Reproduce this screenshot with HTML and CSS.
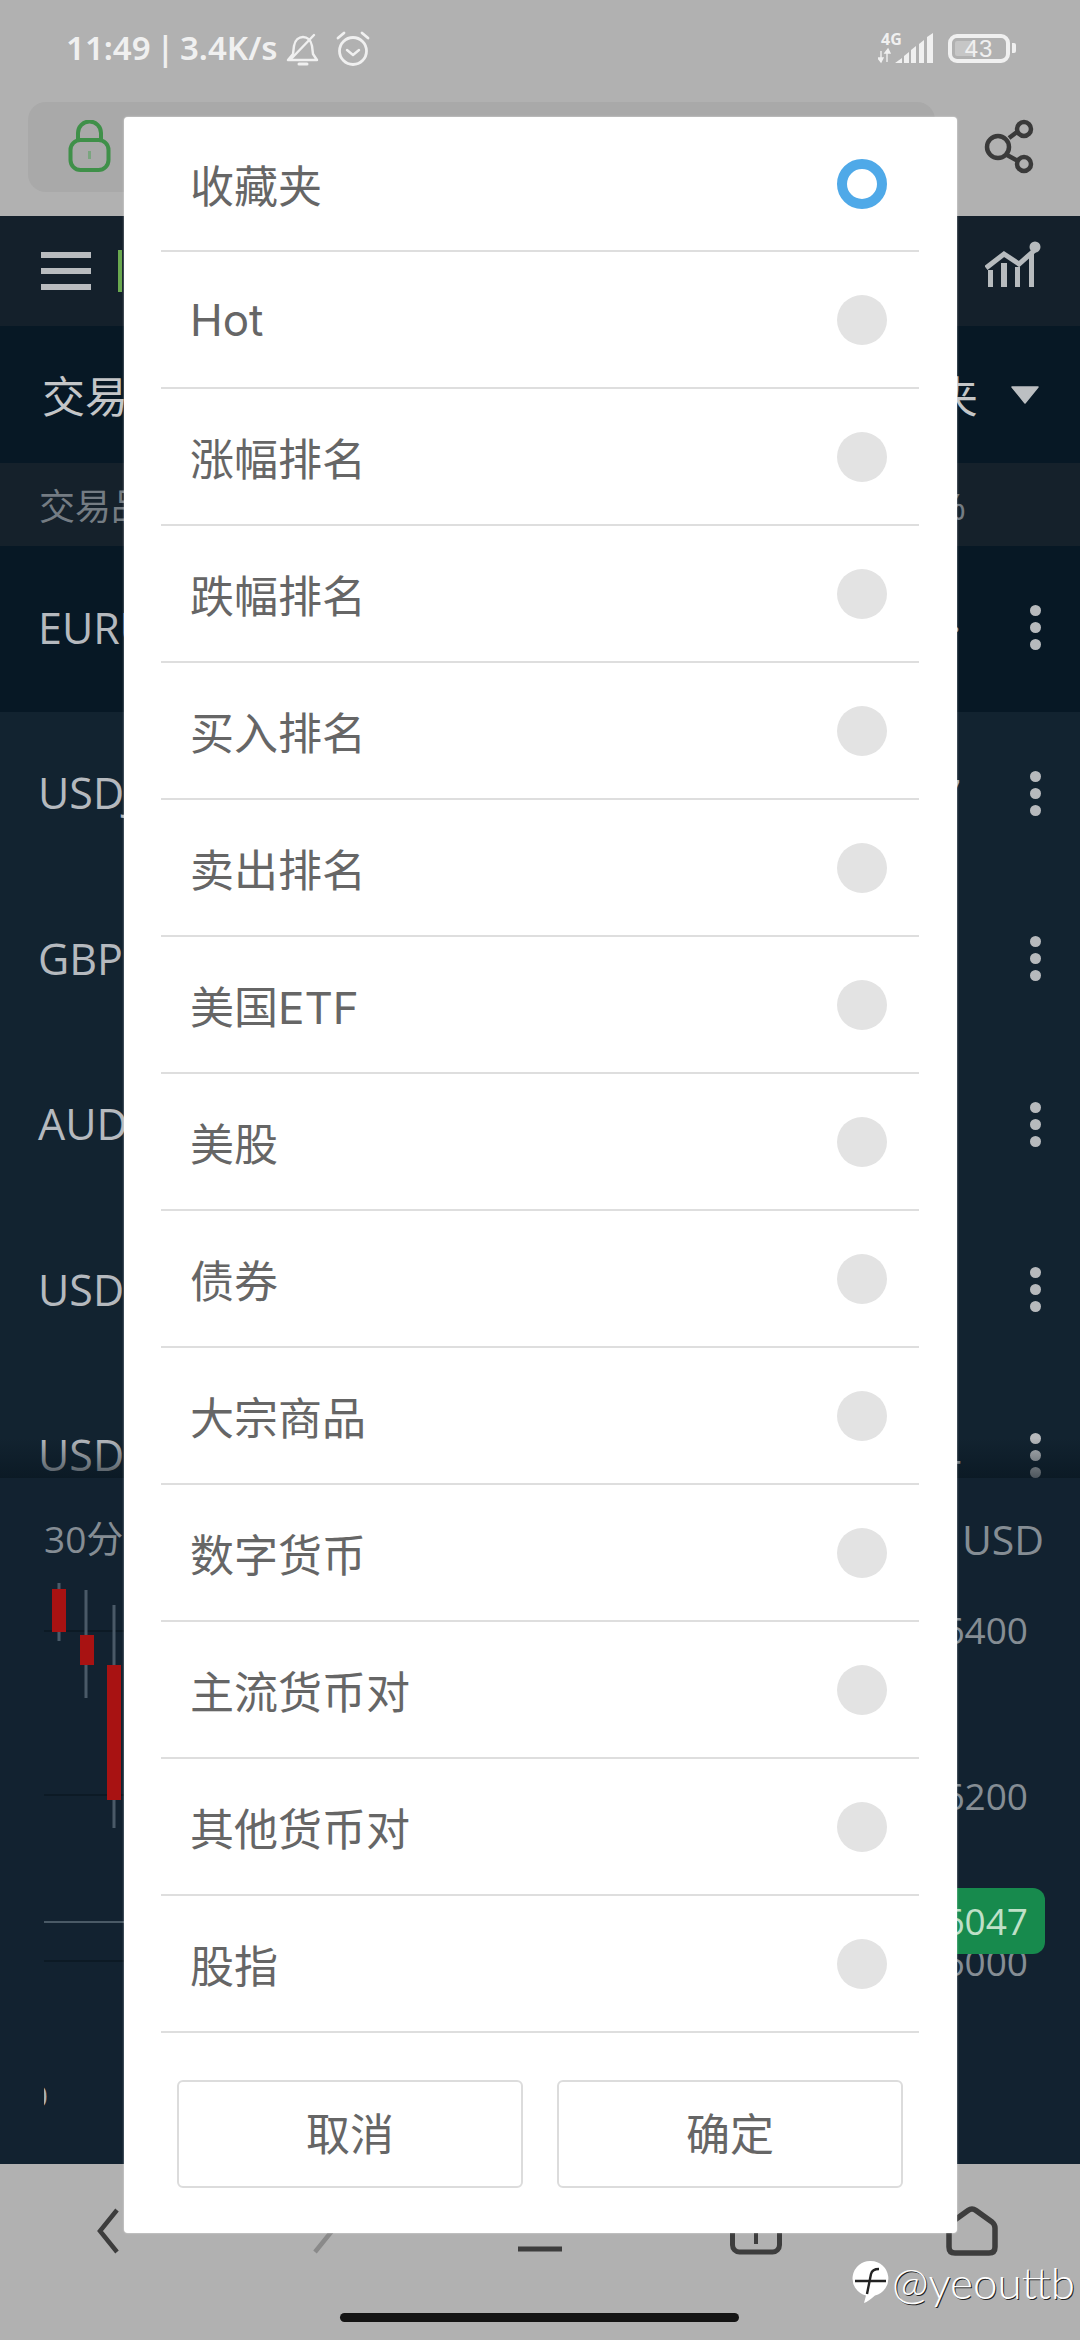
FILE: index.html
```html
<!DOCTYPE html>
<html lang="zh">
<head>
<meta charset="utf-8">
<title>交易品种</title>
<link rel="stylesheet" href="styles.css">
</head>
<body>
<div class="page">
  <section class="top">
    <div class="statusbar">
      <div class="status-left">
        <span class="clock">11:49 | 3.4K/s</span>
        <svg class="bell" width="34" height="34" viewBox="0 0 34 34" fill="none" stroke="#f0f0f0" stroke-width="2.4" stroke-linecap="round" stroke-linejoin="round">
          <path d="M2 27h29l-4-6-1-8c-1-6-5-9-9-9s-8 3-9 9l-1 8z"/>
          <path d="M5 26L28 2"/>
          <path d="M13 31h8" stroke-width="3"/>
        </svg>
        <svg class="alarm" width="36" height="36" viewBox="0 0 36 36" fill="none" stroke="#f0f0f0" stroke-width="2.8" stroke-linecap="round" stroke-linejoin="round">
          <circle cx="18" cy="20" r="13.5"/>
          <path d="M12 19l6 5 6-5" stroke-width="2.4"/>
          <path d="M3 7l6-5M33 7l-6-5"/>
        </svg>
      </div>
      <div class="status-right">
        <svg width="60" height="34" viewBox="0 0 60 34" class="signal">
          <text x="3" y="14" class="net">4G</text>
          <path d="M3 20v11M0 27l3 4 2-4zM9 31V19M7 22l3-4 2 4z" fill="#f0f0f0" stroke="#f0f0f0" stroke-width="1.4"/>
          <path d="M17 32l7-5v5zM26 25l5-4v11h-5zM33 19l5-4v17h-5zM41 13l5-4v23h-5zM49 6l6-4v30h-6z" fill="#f0f0f0"/>
        </svg>
        <div class="battery"><span class="battery-fill"></span><span class="battery-num">43</span></div>
        <span class="battery-nub"></span>
      </div>
    </div>
    <div class="urlrow">
      <div class="urlbar">
        <svg width="44" height="52" viewBox="0 0 44 52" fill="none" stroke="#3f9049" stroke-width="4">
          <rect x="2.5" y="20" width="38" height="30" rx="10"/>
          <path d="M10 20v-7a11.500 11.500 0 0 1 23 0v7"/>
          <path d="M21.500 31v8" stroke-width="3" stroke="#7aa57f"/>
        </svg>
      </div>
      <svg class="share" width="56" height="60" viewBox="0 0 56 60" fill="none" stroke="#3a3a3a" stroke-width="4.500">
        <circle cx="17" cy="29" r="11"/>
        <circle cx="43" cy="11" r="7"/>
        <circle cx="43" cy="46" r="7"/>
        <path d="M28 20l8-6M26 37l11 6"/>
      </svg>
    </div>
  </section>

  <header class="appbar">
    <div class="burger"><span></span><span></span><span></span></div>
    <span class="logo-edge"></span>
    <svg class="trend" width="56" height="50" viewBox="0 0 56 50" fill="none">
      <path d="M3 30h5v17H3zM16 23h6v24h-6zM30 27h5v20h-5zM44 13h5v34h-5z" fill="#b7bbbe"/>
      <path d="M1 28l18-14 15 10 17-15" stroke="#b7bbbe" stroke-width="5"/>
      <circle cx="50" cy="7" r="5.500" fill="#b7bbbe"/>
    </svg>
  </header>

  <nav class="tabs">
    <span class="tab-title">交易品种</span>
    <div class="tab-right">
      <span class="tab-title">收藏夹</span>
      <svg width="30" height="18" viewBox="0 0 30 18"><path d="M2 1h26l-13 16z" fill="#bcbfc2" stroke="#bcbfc2" stroke-width="1.500" stroke-linejoin="round"/></svg>
    </div>
  </nav>

  <div class="subhead">
    <span>交易品种</span>
    <span class="subhead-val">涨跌%</span>
  </div>

  <div class="list">
    <div class="row row-active"><span class="sym">EURUSD</span><span class="val">·</span><div class="dots"><i></i><i></i><i></i></div></div>
    <div class="row"><span class="sym">USDJPY</span><span class="val">7</span><div class="dots"><i></i><i></i><i></i></div></div>
    <div class="row"><span class="sym">GBPUSD</span><span class="val"></span><div class="dots"><i></i><i></i><i></i></div></div>
    <div class="row"><span class="sym">AUDUSD</span><span class="val"></span><div class="dots"><i></i><i></i><i></i></div></div>
    <div class="row"><span class="sym">USDCAD</span><span class="val"></span><div class="dots"><i></i><i></i><i></i></div></div>
    <div class="row"><span class="sym">USDCHF</span><span class="val">4</span><div class="dots"><i></i><i></i><i></i></div></div>
  </div>

  <section class="chart">
    <svg class="plot" width="1080" height="686" viewBox="0 0 1080 686">
      <g stroke="#0c1a25" stroke-width="2">
        <path d="M44 153H960M44 317H960M44 483H960"/>
      </g>
      <path d="M44 444H960" stroke="#4a5a66" stroke-width="2"/>
      <g stroke="#4a5a68" stroke-width="3">
        <path d="M59 105V163M86 112V220M114 127V350"/>
      </g>
      <g fill="#a81212">
        <rect x="52" y="111" width="14" height="43"/>
        <rect x="80" y="157" width="14" height="30"/>
        <rect x="107" y="187" width="14" height="135"/>
      </g>
    </svg>
    <div class="chart-head">
      <span>30分钟</span>
      <span class="chart-unit">USD</span>
    </div>
    <div class="axis">
      <span>6400</span>
      <span>6200</span>
      <span>6000</span>
    </div>
    <span class="price-tag">6047</span>
    <span class="time-label">0</span>
  </section>

  <footer class="browser-nav">
    <svg width="60" height="60" viewBox="0 0 60 60" fill="none" stroke="#3d3d3d" stroke-width="4.500"><path d="M39 9L22 30l17 21"/></svg>
    <svg width="60" height="60" viewBox="0 0 60 60" fill="none" stroke="#8a8a8a" stroke-width="4.500"><path d="M21 9l17 21-17 21"/></svg>
    <svg width="60" height="60" viewBox="0 0 60 60" fill="none" stroke="#3d3d3d" stroke-width="5"><path d="M8 48h44"/></svg>
    <svg width="60" height="60" viewBox="0 0 60 60" fill="none" stroke="#3d3d3d" stroke-width="5"><rect x="6.500" y="8" width="47" height="43" rx="7"/><path d="M30 30v13" stroke-width="4"/></svg>
    <svg width="60" height="60" viewBox="0 0 60 60" fill="none" stroke="#3d3d3d" stroke-width="5.500" stroke-linejoin="round"><path d="M26 9.500Q30 6.500 34 9.500L50 21Q53 23.500 53 27V46Q53 52 47 52H13Q7 52 7 46V27Q7 23.500 10 21Z"/></svg>
  </footer>

  <div class="modal">
    <ul class="options">
      <li class="option"><span>收藏夹</span><i class="radio radio-on"></i></li>
      <li class="option"><span>Hot</span><i class="radio"></i></li>
      <li class="option"><span>涨幅排名</span><i class="radio"></i></li>
      <li class="option"><span>跌幅排名</span><i class="radio"></i></li>
      <li class="option"><span>买入排名</span><i class="radio"></i></li>
      <li class="option"><span>卖出排名</span><i class="radio"></i></li>
      <li class="option"><span>美国ETF</span><i class="radio"></i></li>
      <li class="option"><span>美股</span><i class="radio"></i></li>
      <li class="option"><span>债券</span><i class="radio"></i></li>
      <li class="option"><span>大宗商品</span><i class="radio"></i></li>
      <li class="option"><span>数字货币</span><i class="radio"></i></li>
      <li class="option"><span>主流货币对</span><i class="radio"></i></li>
      <li class="option"><span>其他货币对</span><i class="radio"></i></li>
      <li class="option"><span>股指</span><i class="radio"></i></li>
    </ul>
    <div class="actions">
      <button class="btn">取消</button>
      <button class="btn">确定</button>
    </div>
  </div>

  <div class="watermark">
    <svg width="38" height="44" viewBox="0 0 38 44">
      <path d="M19 1a17.500 17.500 0 0 1 4 34.500C19 39 15 42 12 43l2-7.500A17.500 17.500 0 0 1 19 1z" fill="#fff"/>
      <path d="M15 34l4-20c1-4 4-5 8-5M3 21h31" fill="none" stroke="#222" stroke-width="2.400"/>
    </svg>
    <span>@yeouttb</span>
  </div>
  <span class="home-indicator"></span>
</div>
</body>
</html>
```
FILE: styles.css
```css
* { box-sizing: border-box; }
html, body { margin: 0; padding: 0; background: #b1b1b1; }
body { font-family: "Noto Sans", "Noto Sans CJK SC", sans-serif; }
.page { position: relative; width: 1080px; height: 2340px; overflow: hidden; display: flex; flex-direction: column; }

/* top system + browser */
.top { height: 216px; background: #b1b1b1; flex: none; }
.statusbar { height: 102px; padding: 0 64px 6px 66px; display: flex; justify-content: space-between; align-items: center; color: #f0f0f0; }
.status-left { display: flex; align-items: center; }
.clock { font: 600 33px/40px "Noto Sans", sans-serif; word-spacing: -3px; white-space: nowrap; }
.bell { margin-left: 8px; margin-top: 4px; }
.alarm { margin-left: 15px; margin-top: 2px; }
.status-right { display: flex; align-items: center; }
.signal { margin-right: 10px; }
.net { font: 700 16px "Noto Sans", sans-serif; fill: #f0f0f0; }
.battery { position: relative; width: 62px; height: 29px; border: 4px solid #f0f0f0; border-radius: 9px; display: flex; align-items: center; justify-content: center; }
.battery-fill { position: absolute; left: 3px; top: 3px; bottom: 3px; width: 20px; background: #c6c6c6; border-radius: 2px; }
.battery-num { position: relative; font: 400 24px/21px "Liberation Sans", sans-serif; color: #f0f0f0; letter-spacing: 1px; }
.battery-nub { width: 4px; height: 10px; margin-left: 2px; background: #f0f0f0; border-radius: 0 2px 2px 0; }
.urlrow { display: flex; align-items: flex-start; padding-left: 28px; }
.urlbar { width: 907px; height: 90px; background: #a9a9a9; border-radius: 18px; padding: 18px 0 0 40px; }
.share { margin: 16px 0 0 46px; }

/* app header */
.appbar { height: 110px; flex: none; background: #14202b; display: flex; align-items: center; padding-left: 41px; position: relative; }
.burger { width: 50px; height: 38px; display: flex; flex-direction: column; justify-content: space-between; }
.burger span { display: block; height: 6px; background: #b9bcbf; }
.logo-edge { width: 4px; height: 42px; margin-left: 27px; background: #6aa84f; }
.trend { margin-left: auto; margin-right: 39px; margin-top: -12px; }

.tabs { height: 137px; flex: none; background: #071825; display: flex; justify-content: space-between; align-items: center; padding: 4px 40px 0 42px; }
.tab-title { font-size: 43px; line-height: 60px; color: #c4c6c8; }
.tab-right { display: flex; align-items: center; gap: 32px; }
.tab-right svg { margin-top: -4px; }

.subhead { height: 83px; flex: none; background: #15212b; display: flex; justify-content: space-between; align-items: center; padding: 0 114px 0 39px; color: #747c83; font-size: 36px; }

.list { height: 932px; flex: none; overflow: hidden; background: #122330; position: relative; }
.list::after { content: ""; position: absolute; left: 0; right: 0; bottom: 0; height: 40px; background: linear-gradient(rgba(7,20,30,0), rgba(7,20,30,0.6)); }
.row { height: 165.5px; display: flex; align-items: center; padding: 0 40px 3px 38px; }
.row-active { background: #071825; height: 166px; }
.sym { font: 400 43px/56px "Open Sans", sans-serif; color: #b5b9be; }
.val { margin-left: auto; margin-right: 69px; font: 400 38px/50px "Open Sans", sans-serif; color: #b5b9be; }
.dots { display: flex; flex-direction: column; gap: 6px; width: 11px; margin-right: -1px; }
.dots i { width: 11px; height: 11px; border-radius: 50%; background: #b7babd; }

.chart { height: 686px; flex: none; background: #122230; position: relative; }
.plot { position: absolute; left: 0; top: 0; }
.chart-head { position: relative; display: flex; justify-content: space-between; align-items: center; padding: 36px 36px 0 44px; font: 400 37px/50px "Open Sans", "Noto Sans CJK SC", sans-serif; color: #858d94; }
.chart-unit { font-size: 41px; }
.axis { position: relative; display: flex; flex-direction: column; align-items: flex-end; margin-top: -17px; padding-right: 52px; color: #858d94; font: 400 37px/166px "Open Sans", sans-serif; }
.price-tag { position: absolute; left: 940px; top: 410px; width: 105px; height: 66px; padding-right: 17px; text-align: right; background: #178a4d; border-radius: 12px; color: #bfe0c8; font: 400 37px/66px "Open Sans", sans-serif; }
.time-label { position: absolute; left: 44px; top: 596px; width: 4px; overflow: hidden; direction: rtl; font: 400 30px/44px "Open Sans", sans-serif; color: #aab0b5; }

.browser-nav { height: 177px; flex: none; background: #b1b1b1; display: grid; grid-template-columns: repeat(5, 1fr); justify-items: center; align-items: start; padding-top: 37px; }

/* dialog */
.modal { position: absolute; left: 124px; top: 117px; width: 833px; height: 2116px; background: #fff; border-radius: 4px; box-shadow: 0 0 2px rgba(255,255,255,0.7); padding: 0 38px 0 37px; }
.options { list-style: none; margin: 0; padding: 0; }
.option { height: 137px; padding: 0 32px 0 29px; border-bottom: 2px solid #dedede; display: flex; justify-content: space-between; align-items: center; color: #666; font: 400 44px "Inter", "Noto Sans CJK SC", sans-serif; }
.option:first-child { height: 135px; }
.radio { display: block; width: 50px; height: 50px; border-radius: 50%; background: #e3e3e3; }
.radio-on { background: #fff; border: 10px solid #4fa9e8; }
.actions { display: flex; gap: 34px; padding: 47px 16px 0 16px; }
.btn { width: 346px; height: 108px; border: 2px solid #dcdcdc; border-radius: 6px; background: #fff; color: #666; font: 400 44px "Inter", "Noto Sans CJK SC", sans-serif; padding: 0 0 4px; }

.watermark { position: absolute; left: 852px; top: 2259px; display: flex; align-items: center; gap: 2px; color: #fff; font: 300 44px/46px "Lato", sans-serif; text-shadow: 1px 1px 0 #222; }
.home-indicator { position: absolute; left: 340px; top: 2313px; width: 399px; height: 9px; border-radius: 5px; background: #141414; }
```
